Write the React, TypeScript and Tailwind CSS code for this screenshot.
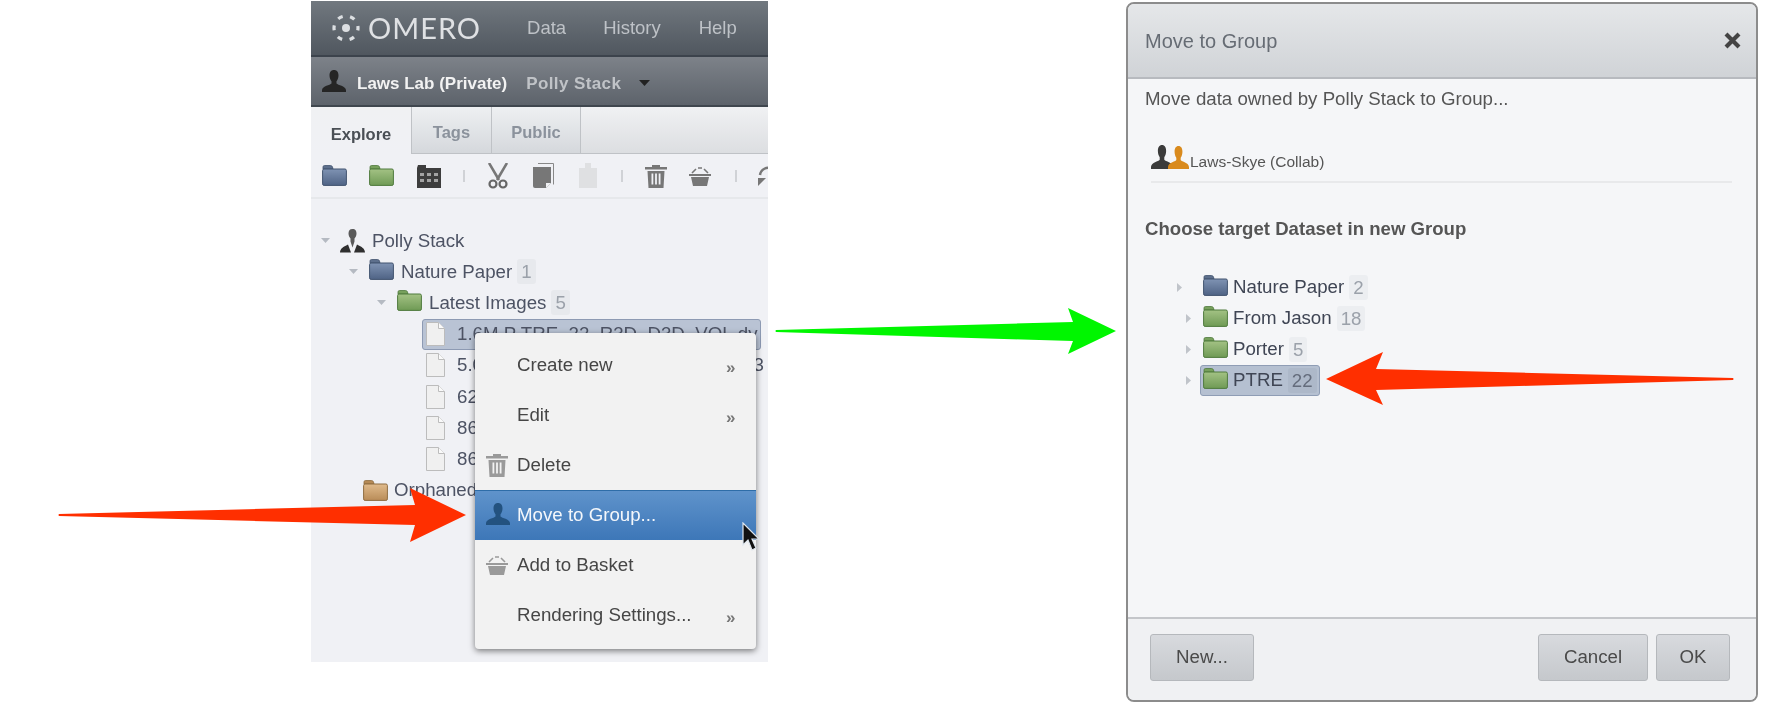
import React from "react";

const FOLDERS = {
  blue: ["#7f93b3", "#4f6385", "#41536f", "#5d6f8c"],
  green: ["#a3c284", "#6f9a55", "#4f7a3d", "#77a05c"],
  orange: ["#e0bb8c", "#b98c58", "#8f6d40", "#b58a56"],
} as const;

function Folder({ kind, w = 25, h = 21 }: { kind: keyof typeof FOLDERS; w?: number; h?: number }) {
  const [a, b, c, t] = FOLDERS[kind];
  const id = `f-${kind}-${w}`;
  return (
    <svg width={w} height={h} viewBox="0 0 25 21" className="shrink-0" preserveAspectRatio="none">
      <defs>
        <linearGradient id={id} x1="0" y1="0" x2="0" y2="1">
          <stop offset="0" stopColor={a} />
          <stop offset="1" stopColor={b} />
        </linearGradient>
      </defs>
      <path d="M1 4V2q0-1.500 1.500-1.500h6q1.500 0 2 1.500l.5 2z" fill={t} stroke={c} strokeWidth="0.8" />
      <rect x="0.6" y="4" width="23.800" height="16.400" rx="1.500" fill={`url(#${id})`} stroke={c} strokeWidth="1" />
    </svg>
  );
}

function Person({ color = "#333", w = 24, h = 22 }: { color?: string; w?: number; h?: number }) {
  return (
    <svg width={w} height={h} viewBox="0 0 24 22" className="shrink-0" preserveAspectRatio="none">
      <path
        d="M12 0C9 0 7.500 2.200 7.500 5.500c0 2.500 1 4.500 2 5.800v2.200c-1.500 1.800-8.800 2.200-9.500 6.500V22h24v-2c-.7-4.300-8-4.700-9.500-6.500v-2.200c1-1.300 2-3.300 2-5.800C16.500 2.200 15 0 12 0z"
        fill={color}
      />
    </svg>
  );
}

function OwnerIcon() {
  return (
    <svg width="25" height="24" viewBox="0 0 25 24" className="shrink-0">
      <path d="M12.500 0C9.500 0 8.500 2 8.500 4.500c0 2.200 1 4 2 5v3l2 6 2-6v-3c1-1 2-2.800 2-5C16.500 2 15.500 0 12.500 0z" fill="#5a5a5a" />
      <path d="M0 23.500c.3-4 3-5.500 8-8l3 8zM25 23.500c-.3-4-3-5.500-8-8l-3 8z" fill="#2f2f2f" />
    </svg>
  );
}

function Logo() {
  return (
    <svg width="32" height="28" viewBox="0 0 32 28" className="shrink-0">
      <circle cx="16" cy="14" r="4" fill="#dcdfe2" />
      <circle cx="16" cy="14" r="12" fill="none" stroke="#dcdfe2" strokeWidth="3.200" strokeDasharray="5 7.570" strokeDashoffset="2.500" />
    </svg>
  );
}

function FileIcon() {
  return (
    <svg width="19" height="24" viewBox="0 0 19 24" className="shrink-0">
      <path d="M.5.500h12l6 6v17H.5z" fill="#f0f0f0" stroke="#bcbcbc" />
      <path d="M12.500.500v6h6" fill="#fafafa" stroke="#bcbcbc" />
    </svg>
  );
}

function Caret({ open }: { open?: boolean }) {
  return open ? (
    <svg width="9" height="5" viewBox="0 0 9 5" className="shrink-0">
      <path d="M0 0h9L4.500 5z" fill="#b5bac2" />
    </svg>
  ) : (
    <svg width="5" height="9" viewBox="0 0 5 9" className="shrink-0">
      <path d="M0 0v9l5-4.500z" fill="#c0c4ca" />
    </svg>
  );
}

function Trash({ color = "#777", w = 22, h = 24 }: { color?: string; w?: number; h?: number }) {
  return (
    <svg width={w} height={h} viewBox="0 0 22 24" className="shrink-0">
      <path d="M7 3V1h8v2h7v2.500H0V3z" fill={color} />
      <path d="M2.500 7h17l-1 17h-15zM6.500 9.500v11h1.800v-11zM10.100 9.500v11h1.800v-11zM13.700 9.500v11h1.800v-11z" fill={color} fillRule="evenodd" />
    </svg>
  );
}

function Basket({ color = "#777", w = 22, h = 20 }: { color?: string; w?: number; h?: number }) {
  return (
    <svg width={w} height={h} viewBox="0 0 22 20" className="shrink-0">
      <path d="M3 7l4-4M19 7l-4-4M9 2h4" stroke={color} strokeWidth="1.600" fill="none" />
      <path d="M0 8h22v2H0zM2 11h18l-2 9H4z" fill={color} />
    </svg>
  );
}

function Sep({ ml }: { ml: string }) {
  return <div className={`h-[12px] w-[2px] shrink-0 bg-[#d0d2d6] ${ml}`} />;
}

function Toolbar() {
  return (
    <div className="flex h-[45px] items-center border-b-2 border-[#e6e8eb] pl-[11px]">
      <Folder kind="blue" />
      <div className="ml-[22px] shrink-0">
        <Folder kind="green" />
      </div>
      <svg width="24" height="24" viewBox="0 0 24 24" className="ml-[23px] shrink-0">
        <path d="M0 4h9V1H1zM0 4h24v20H0z" fill="#3d3d3d" />
        <path d="M3 9h4v3H3zM10 9h4v3h-4zM17 9h4v3h-4zM3 15h4v3H3zM10 15h4v3h-4zM17 15h4v3h-4z" fill="#a3a3a3" />
      </svg>
      <Sep ml="ml-[22px]" />
      <svg width="20" height="26" viewBox="0 0 20 26" className="ml-[23px] shrink-0">
        <path d="M1 0l10 17M19 0L9 17" stroke="#777" strokeWidth="2.600" fill="none" />
        <circle cx="5" cy="21" r="3.500" fill="none" stroke="#666" strokeWidth="2.200" />
        <circle cx="15" cy="21" r="3.500" fill="none" stroke="#666" strokeWidth="2.200" />
      </svg>
      <svg width="21" height="25" viewBox="0 0 21 25" className="ml-[25px] shrink-0">
        <path d="M5 .500h15.500v21" fill="none" stroke="#888" />
        <path d="M0 4h18v16l-5 5H2a2 2 0 0 1-2-2z" fill="#777" />
        <path d="M13 25v-5h5z" fill="#f0f1f4" />
      </svg>
      <svg width="18" height="25" viewBox="0 0 18 25" className="ml-[25px] shrink-0">
        <path d="M0 5h6V0h6v5h6v20H0z" fill="#dfe0e2" />
      </svg>
      <Sep ml="ml-[24px]" />
      <div className="ml-[22px] shrink-0">
        <Trash />
      </div>
      <div className="ml-[22px] shrink-0">
        <Basket />
      </div>
      <Sep ml="ml-[24px]" />
      <svg width="16" height="24" viewBox="0 0 16 24" className="ml-[21px] shrink-0">
        <path d="M2 11A8 8 0 0 1 14 5" fill="none" stroke="#777" strokeWidth="2.500" />
        <path d="M0 14h8l-8 8z" fill="#777" />
      </svg>
    </div>
  );
}

function Badge({ n, bg = "bg-[#e7e9ed]", color = "text-[#9ba1aa]" }: { n: string; bg?: string; color?: string }) {
  return <span className={`ml-[5px] rounded-[3px] px-[4px] leading-[25px] ${color} ${bg}`}>{n}</span>;
}

function Row({ pad, children }: { pad: string; children: React.ReactNode }) {
  return <div className={`flex h-[31.2px] items-center whitespace-nowrap ${pad}`}>{children}</div>;
}

function ImageRow({ name }: { name: string }) {
  return (
    <Row pad="pl-[115px]">
      <FileIcon />
      <span className="ml-[12px]">{name}</span>
    </Row>
  );
}

function LeftPanel() {
  return (
    <div className="mt-px h-[661px] w-[457px] shrink-0 overflow-hidden bg-[#f0f1f5] font-['Liberation_Sans',sans-serif]">
      <div className="flex h-[56px] items-center border-b-2 border-[#3c434c] bg-gradient-to-b from-[#71787f] to-[#50575f] pl-[19px] text-[18.500px] text-[#bec2c7]">
        <Logo />
        <span className="ml-[6px] font-['Lato',sans-serif] text-[29px] font-normal tracking-[1px] text-[#dfe1e4]">OMERO</span>
        <span className="ml-[46px]">Data</span>
        <span className="ml-[37px]">History</span>
        <span className="ml-[38px]">Help</span>
      </div>
      <div className="flex h-[50px] items-center border-b-2 border-[#3f464e] bg-gradient-to-b from-[#7d8289] to-[#5d636b] pl-[11px] text-[17px] font-bold">
        <Person color="#252525" />
        <span className="ml-[11px] mt-[5px] text-[#f2f2f2]">Laws Lab (Private)</span>
        <span className="ml-[19px] mt-[5px] tracking-[0.400px] text-[#c0c3c7]">Polly Stack</span>
        <svg width="11" height="6" viewBox="0 0 11 6" className="ml-[18px] mt-[4px]">
          <path d="M0 0h11L5.500 6z" fill="#222" />
        </svg>
      </div>
      <div className="flex h-[47px] border-b border-[#bfc2c6] bg-gradient-to-b from-[#f0f1f3] to-[#dcdee1] text-[16.500px] font-bold">
        <div className="-mb-px flex w-[101px] items-center justify-center border-r border-[#bfc2c6] bg-gradient-to-b from-[#f0f1f3] to-[#f0f1f5] pt-[8px] text-[#4a4f55]">Explore</div>
        <div className="flex w-[80px] items-center justify-center border-r border-[#bfc2c6] bg-gradient-to-b from-[#eef0f2] to-[#d5d8dc] pt-[5px] text-[#8b929c]">Tags</div>
        <div className="flex w-[89px] items-center justify-center border-r border-[#bfc2c6] bg-gradient-to-b from-[#eef0f2] to-[#d5d8dc] pt-[5px] text-[#8b929c]">Public</div>
      </div>
      <Toolbar />
      <div className="pt-[26px] text-[18.700px] text-[#4d5364]">
        <Row pad="pl-[10px]">
          <Caret open />
          <span className="ml-[10px]"><OwnerIcon /></span>
          <span className="ml-[7px]">Polly Stack</span>
        </Row>
        <Row pad="pl-[38px]">
          <Caret open />
          <span className="ml-[11px] -mt-[5px]"><Folder kind="blue" /></span>
          <span className="ml-[7px]">Nature Paper</span>
          <Badge n="1" />
        </Row>
        <Row pad="pl-[66px]">
          <Caret open />
          <span className="ml-[11px] -mt-[5px]"><Folder kind="green" /></span>
          <span className="ml-[7px]">Latest Images</span>
          <Badge n="5" />
        </Row>
        <div className="ml-[111px] mr-[7px] flex h-[31.200px] items-center overflow-hidden whitespace-nowrap rounded-[3px] border border-[#8d9ab3] bg-[#b9c3d4] pl-[3px]">
          <FileIcon />
          <span className="ml-[12px]">1.6M P TRE_22_R3D_D3D_VOL.dv</span>
        </div>
        <ImageRow name="5.0M P TRE_22_R3D_D3D_VOL_03" />
        <ImageRow name="62x_PTRE.dv" />
        <ImageRow name="86_R3D.dv" />
        <ImageRow name="86_D3D.dv" />
        <Row pad="pl-[52px]">
          <Folder kind="orange" />
          <span className="ml-[6px]">Orphaned Images</span>
        </Row>
      </div>
    </div>
  );
}

function MenuItem({ label, icon, more }: { label: string; icon?: React.ReactNode; more?: boolean }) {
  return (
    <div className="relative flex h-[50px] items-center pl-[42px] text-[#464646]">
      {icon && <span className="absolute left-[11px] top-1/2 -translate-y-1/2">{icon}</span>}
      <span>{label}</span>
      {more && <span className="absolute left-[251px] top-[15px] text-[17px] font-bold text-[#777]">»</span>}
    </div>
  );
}

function ContextMenu() {
  return (
    <div className="absolute left-[475px] top-[333px] h-[316px] w-[281px] rounded-[4px] bg-[#f2f2f2] pt-[7px] font-['Liberation_Sans',sans-serif] text-[18.700px] shadow-[0_2px_6px_rgba(0,0,0,0.5)]">
      <MenuItem label="Create new" more />
      <MenuItem label="Edit" more />
      <MenuItem label="Delete" icon={<Trash color="#9a9a9a" />} />
      <div className="relative flex h-[50px] items-center border-t border-[#2e6da8] bg-gradient-to-b from-[#5f93cb] to-[#3d77b8] pl-[42px] text-[#f4f7fb]">
        <span className="absolute left-[11px] top-[12px]"><Person color="#23527f" /></span>
        Move to Group...
      </div>
      <MenuItem label="Add to Basket" icon={<Basket color="#9a9a9a" />} />
      <MenuItem label="Rendering Settings..." more />
    </div>
  );
}

function Cursor() {
  return (
    <svg width="18" height="30" viewBox="0 0 18 30" className="absolute left-[742px] top-[522px]">
      <path d="M1 1v22l5-5 4 10 4-2-4-9h7z" fill="#111" stroke="#dfe6ee" strokeWidth="1.200" />
    </svg>
  );
}

function Dialog() {
  return (
    <div className="mt-[2px] flex h-[700px] w-[632px] shrink-0 flex-col overflow-hidden rounded-[8px] border-2 border-[#8c8c8c] bg-[#f5f6f8] font-['Liberation_Sans',sans-serif] text-[#555]">
      <div className="flex h-[75px] shrink-0 items-center justify-between border-b-2 border-[#b7babf] bg-gradient-to-b from-[#e5e7e9] to-[#d0d3d7] pl-[17px] pr-[15px] text-[20px] text-[#666c74]">
        <span>Move to Group</span>
        <svg width="17" height="17" viewBox="0 0 17 17">
          <path d="M2 2l13 13M15 2L2 15" stroke="#444" strokeWidth="4.200" />
        </svg>
      </div>
      <div className="min-h-0 flex-1 pl-[17px]">
        <div className="mt-[11px] text-[18.700px] leading-[18px] text-[#555]">Move data owned by Polly Stack to Group...</div>
        <div className="mr-[24px] ml-[6px] mt-[35px] flex h-[40px] items-end border-b-2 border-[#e8e9eb] pb-[12px]">
          <div className="relative h-[24px] w-[39px] shrink-0">
            <span className="absolute left-0 top-0"><Person color="#3b3b3b" w={22} h={24} /></span>
            <span className="absolute left-[17px] top-[1px]"><Person color="#d98a1d" w={21} h={23} /></span>
          </div>
          <span className="text-[15.500px] leading-[14px] text-[#555]">Laws-Skye (Collab)</span>
        </div>
        <div className="mt-[37px] text-[18.600px] font-bold leading-[18px] text-[#555]">Choose target Dataset in new Group</div>
        <div className="mt-[34px] w-[400px] text-[18.700px] text-[#3f4554]">
          <div className="flex h-[31px] items-center">
            <span className="ml-[32px] flex"><Caret /></span>
            <span className="ml-[21px] -mt-[5px]"><Folder kind="blue" /></span>
            <span className="ml-[5px]">Nature Paper</span>
            <Badge n="2" bg="bg-[#eceef1]" />
          </div>
          <div className="flex h-[31px] items-center">
            <span className="ml-[41px] flex"><Caret /></span>
            <span className="ml-[12px] -mt-[5px]"><Folder kind="green" /></span>
            <span className="ml-[5px]">From Jason</span>
            <Badge n="18" bg="bg-[#eceef1]" />
          </div>
          <div className="flex h-[31px] items-center">
            <span className="ml-[41px] flex"><Caret /></span>
            <span className="ml-[12px] -mt-[5px]"><Folder kind="green" /></span>
            <span className="ml-[5px]">Porter</span>
            <Badge n="5" bg="bg-[#eceef1]" />
          </div>
          <div className="flex h-[31px] items-center">
            <span className="ml-[41px] flex"><Caret /></span>
            <span className="ml-[9px] flex h-[31px] items-center rounded-[3px] border border-[#8f9db5] bg-[#b5c0d1] pl-[2px] pr-[2px]">
              <span className="-mt-[5px]"><Folder kind="green" /></span>
              <span className="ml-[5px]">PTRE</span>
              <Badge n="22" bg="bg-[#adb8c9]" color="text-[#646c7c]" />
            </span>
          </div>
        </div>
      </div>
      <div className="flex h-[83px] shrink-0 items-start border-t-2 border-[#c4c6ca] bg-[#f0f1f3] pl-[22px] pr-[26px] pt-[15px] text-[18.700px] text-[#4a4a4a]">
        <button className="h-[47px] w-[104px] rounded-[3px] border border-[#b5b8bc] bg-gradient-to-b from-[#d8dade] to-[#c5c8cc]">New...</button>
        <button className="ml-auto h-[47px] w-[110px] rounded-[3px] border border-[#b5b8bc] bg-gradient-to-b from-[#d8dade] to-[#c5c8cc]">Cancel</button>
        <button className="ml-[8px] h-[47px] w-[74px] rounded-[3px] border border-[#b5b8bc] bg-gradient-to-b from-[#d8dade] to-[#c5c8cc]">OK</button>
      </div>
    </div>
  );
}

function Arrows() {
  return (
    <svg width="1792" height="703" viewBox="0 0 1792 703" className="pointer-events-none absolute left-0 top-0">
      <path d="M59 514L415 505L410 488L466 515L410 542L415 525L59 516Q58 515 59 514z" fill="#ff2f00" />
      <path d="M776 330L1073 322L1068 308L1116 331L1068 354L1073 341L776 332Q775 331 776 330z" fill="#00f600" />
      <path d="M1733 378L1376 369L1383 352L1326 379L1383 405L1376 390L1733 380Q1734 379 1733 378z" fill="#ff2f00" />
    </svg>
  );
}

export default function App() {
  return (
    <div className="relative h-[703px] w-[1792px] overflow-hidden bg-white blur-[0.4px]">
      <div className="flex items-start pl-[311px]">
        <LeftPanel />
        <div className="ml-[358px] shrink-0">
          <Dialog />
        </div>
      </div>
      <ContextMenu />
      <Cursor />
      <Arrows />
    </div>
  );
}
